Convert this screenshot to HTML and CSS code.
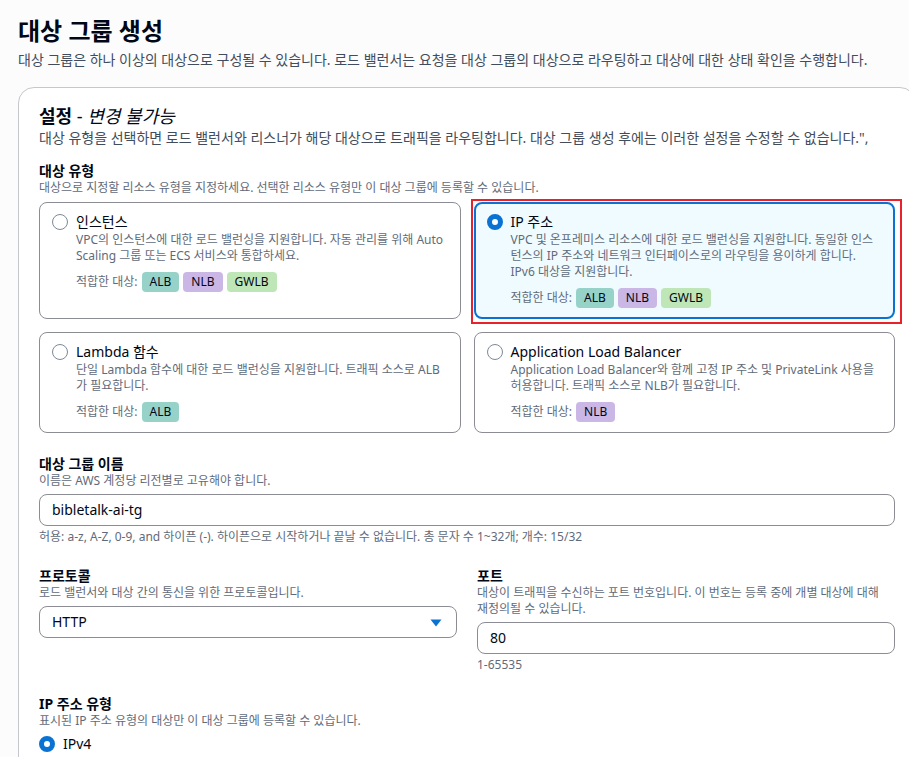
FILE: index.html
```html
<!DOCTYPE html>
<html lang="ko">
<head>
    <meta charset="UTF-8">
    <meta name="viewport" content="width=device-width, initial-scale=1.0">
    <title>대상 그룹 생성</title>
    <link rel="stylesheet" href="styles.css">
</head>
<body>

    <div class="page-header">
        <h1>대상 그룹 생성</h1>
        <p class="page-desc">대상 그룹은 하나 이상의 대상으로 구성될 수 있습니다. 로드 밸런서는 요청을 대상 그룹의 대상으로 라우팅하고 대상에 대한 상태 확인을 수행합니다.</p>
    </div>

    <div class="panel">
        <h2>설정 <span class="h2-note">- <i>변경 불가능</i></span></h2>
        <p class="panel-desc">대상 유형을 선택하면 로드 밸런서와 리스너가 해당 대상으로 트래픽을 라우팅합니다. 대상 그룹 생성 후에는 이러한 설정을 수정할 수 없습니다.",</p>

        <div class="field first">
            <div class="label">대상 유형</div>
            <div class="hint">대상으로 지정할 리소스 유형을 지정하세요. 선택한 리소스 유형만 이 대상 그룹에 등록할 수 있습니다.</div>

            <div class="tiles">
                <div class="tile">
                    <span class="radio"></span>
                    <div class="tile-body">
                        <div class="tile-title">인스턴스</div>
                        <div class="tile-desc">VPC의 인스턴스에 대한 로드 밸런싱을 지원합니다. 자동 관리를 위해 Auto Scaling 그룹 또는 ECS 서비스와 통합하세요.</div>
                        <div class="fit">적합한 대상: <span class="badge alb">ALB</span><span class="badge nlb">NLB</span><span class="badge gwlb">GWLB</span></div>
                    </div>
                </div>
                <div class="tile selected marked">
                    <span class="radio on"></span>
                    <div class="tile-body">
                        <div class="tile-title">IP 주소</div>
                        <div class="tile-desc">VPC 및 온프레미스 리소스에 대한 로드 밸런싱을 지원합니다. 동일한 인스턴스의 IP 주소와 네트워크 인터페이스로의 라우팅을 용이하게 합니다. IPv6 대상을 지원합니다.</div>
                        <div class="fit">적합한 대상: <span class="badge alb">ALB</span><span class="badge nlb">NLB</span><span class="badge gwlb">GWLB</span></div>
                    </div>
                </div>
                <div class="tile">
                    <span class="radio"></span>
                    <div class="tile-body">
                        <div class="tile-title">Lambda 함수</div>
                        <div class="tile-desc">단일 Lambda 함수에 대한 로드 밸런싱을 지원합니다. 트래픽 소스로 ALB가 필요합니다.</div>
                        <div class="fit">적합한 대상: <span class="badge alb">ALB</span></div>
                    </div>
                </div>
                <div class="tile">
                    <span class="radio"></span>
                    <div class="tile-body">
                        <div class="tile-title">Application Load Balancer</div>
                        <div class="tile-desc">Application Load Balancer와 함께 고정 IP 주소 및 PrivateLink 사용을 허용합니다. 트래픽 소스로 NLB가 필요합니다.</div>
                        <div class="fit">적합한 대상: <span class="badge nlb">NLB</span></div>
                    </div>
                </div>
            </div>
        </div>

        <div class="field">
            <div class="label">대상 그룹 이름</div>
            <div class="hint">이름은 AWS 계정당 리전별로 고유해야 합니다.</div>
            <div class="input">bibletalk-ai-tg</div>
            <div class="hint after">허용: a-z, A-Z, 0-9, and 하이픈 (-). 하이픈으로 시작하거나 끝날 수 없습니다. 총 문자 수 1~32개; 개수: 15/32</div>
        </div>

        <div class="field cols">
            <div>
                <div class="label">프로토콜</div>
                <div class="hint">로드 밸런서와 대상 간의 통신을 위한 프로토콜입니다.</div>
                <div class="input select">HTTP
                    <svg class="caret" width="12" height="8" viewBox="0 0 12 8"><path d="M0.5 0.5h11L6 7.5z" fill="#0972d3"/></svg>
                </div>
            </div>
            <div>
                <div class="label">포트</div>
                <div class="hint words">대상이 트래픽을 수신하는 포트 번호입니다. 이 번호는 등록 중에 개별 대상에 대해 재정의될 수 있습니다.</div>
                <div class="input">80</div>
                <div class="hint after">1-65535</div>
            </div>
        </div>

        <div class="field">
            <div class="label">IP 주소 유형</div>
            <div class="hint">표시된 IP 주소 유형의 대상만 이 대상 그룹에 등록할 수 있습니다.</div>
            <div class="option"><span class="radio on"></span>IPv4</div>
        </div>
    </div>

</body>
</html>
```

FILE: styles.css
```css
/* 대상 그룹 생성 폼 */
html { overflow: hidden; }
body { margin: 0; padding: 16px 0 0 18px; background-color: #fcfcfc; color: #000716; font-family: "Noto Sans", "Noto Sans CJK KR", sans-serif; font-size: 14px; line-height: 20px; }

h1 { margin: 0; font-size: 24px; line-height: 30px; font-weight: 700; }
.page-desc { margin: 4px 0 0; color: #414d5c; }

.panel { margin-top: 17px; width: 856px; padding: 16px 20px 40px 20px; background-color: #ffffff; border: 1px solid #c6c6cd; border-radius: 16px; }
h2 { margin: 0; font-size: 18px; line-height: 24px; font-weight: 700; }
.h2-note { font-weight: 400; }
.panel-desc { margin: 0; color: #414d5c; }

.field { margin-top: 22px; }
.field.first { margin-top: 14px; }
.label { font-weight: 700; line-height: 18px; }
.hint { font-size: 12px; line-height: 16px; color: #5f6b7a; }
.hint.after { margin-top: 3px; }
.hint.words { word-break: keep-all; }

/* 대상 유형 타일 */
.tiles { display: grid; grid-template-columns: 1fr 1fr; gap: 13px; margin-top: 6px; }
.tile { position: relative; display: flex; gap: 8px; padding: 9px 12px 10px 12px; border: 1px solid #8c8c94; border-radius: 8px; }
.tile.selected { padding: 8px 11px 9px 11px; border: 2px solid #0972d3; background-color: #f0fbff; }
.tile.marked::after { content: ""; position: absolute; left: -5px; right: -9px; top: -5px; bottom: -7px; border: 2px solid #e8222a; pointer-events: none; }
.tile-title { line-height: 20px; }
.tile-desc { font-size: 12px; line-height: 16px; color: #5f6b7a; }
.fit { margin-top: 8px; display: flex; align-items: center; font-size: 12px; color: #5f6b7a; }
.badge { display: inline-block; margin-left: 4px; padding: 0 8px; height: 20px; line-height: 20px; border-radius: 4px; font-size: 12px; color: #000716; }
.alb { background-color: #97d2c8; }
.nlb { background-color: #cab7e6; }
.gwlb { background-color: #bfe6b7; }

.radio { flex: none; box-sizing: border-box; width: 16px; height: 16px; margin-top: 2px; border: 1.5px solid #7d8998; border-radius: 50%; background: #fff; }
.radio.on { border: 5px solid #0972d3; }

/* 입력 */
.input { position: relative; box-sizing: border-box; height: 32px; margin-top: 5px; padding: 5px 12px; border: 1px solid #8c8c94; border-radius: 8px; background: #fff; line-height: 20px; }
.select .caret { position: absolute; right: 14px; top: 12px; }
.cols { display: grid; grid-template-columns: 1fr 1fr; gap: 20px; }

.option { display: flex; align-items: center; gap: 8px; margin-top: 5px; }
.option .radio { margin-top: 0; }
```
